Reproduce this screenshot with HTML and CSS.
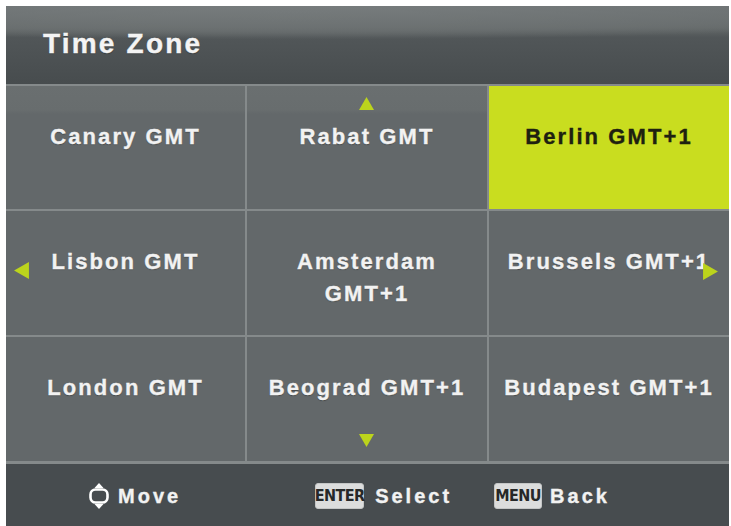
FILE: index.html
```html
<!DOCTYPE html>
<html lang="en">
<head>
<meta charset="utf-8">
<title>Time Zone</title>
<link rel="stylesheet" href="styles.css">
</head>
<body>
<div class="panel">
  <header class="head">
    <h1 class="title">Time Zone</h1>
  </header>
  <div class="grid">
    <div class="cell first">Canary GMT</div>
    <div class="cell first">Rabat GMT
      <svg class="arrow arrow-up" viewBox="0 0 14 12"><polygon points="7,0 14,12 0,12"/></svg>
    </div>
    <div class="cell selected">Berlin GMT+1</div>
    <div class="cell">Lisbon GMT
      <svg class="arrow arrow-left" viewBox="0 0 14 16"><polygon points="0,8 14,0 14,16"/></svg>
    </div>
    <div class="cell">Amsterdam<br>GMT+1</div>
    <div class="cell">Brussels GMT+1
      <svg class="arrow arrow-right" viewBox="0 0 14 16"><polygon points="14,8 0,0 0,16"/></svg>
    </div>
    <div class="cell">London GMT</div>
    <div class="cell">Beograd GMT+1
      <svg class="arrow arrow-down" viewBox="0 0 14 12"><polygon points="7,12 14,0 0,0"/></svg>
    </div>
    <div class="cell">Budapest GMT+1</div>
  </div>
  <footer class="foot">
    <div class="hint hint-move">
      <svg class="move-icon" viewBox="0 0 24 28">
        <rect x="3.5" y="7.5" width="17" height="13" rx="5" ry="5" fill="none" stroke="#ffffff" stroke-width="2.6"/>
        <polygon points="12,1 7.5,6 16.5,6" fill="#ffffff"/>
        <polygon points="12,27 7.5,22 16.5,22" fill="#ffffff"/>
      </svg>
      <span class="hint-label">Move</span>
    </div>
    <div class="hint hint-select">
      <span class="key">ENTER</span>
      <span class="hint-label">Select</span>
    </div>
    <div class="hint hint-back">
      <span class="key key-menu">MENU</span>
      <span class="hint-label">Back</span>
    </div>
  </footer>
</div>
</body>
</html>
```

FILE: styles.css
```css
html, body {
  margin: 0;
  padding: 0;
  background: #ffffff;
}

body {
  font-family: "Liberation Sans", Arial, sans-serif;
}

.panel {
  margin: 6px 2px 0 6px;
  width: 723px;
  height: 520px;
  display: flex;
  flex-direction: column;
  background: #464b4d;
}

.head {
  height: 78px;
  box-sizing: border-box;
  padding: 23px 0 0 37px;
  background:
    radial-gradient(ellipse 140% 60% at 40% 0%, rgba(120, 125, 126, 0.9) 0%, rgba(110, 115, 116, 0.6) 55%, rgba(110, 115, 116, 0) 72%),
    linear-gradient(to bottom, #6c7172 0%, #646969 28%, #515658 40%, #474c4e 100%);
}

.title {
  margin: 0;
  font-size: 28px;
  line-height: 30px;
  font-weight: bold;
  letter-spacing: 2.2px;
  color: #f4f4f4;
  -webkit-text-stroke: 0.4px #f4f4f4;
  text-shadow: 0 1px 1px rgba(0, 0, 0, 0.35);
}

.grid {
  display: grid;
  grid-template-columns: 239px 240px 240px;
  grid-template-rows: 123px 124px 124px;
  gap: 2px;
  padding: 2px 0;
  height: 380px;
  box-sizing: border-box;
  background: #858a8b;
}

.cell {
  position: relative;
  background: #63686a;
  box-sizing: border-box;
  padding-top: 35px;
  text-align: center;
  font-size: 22px;
  line-height: 32px;
  font-weight: bold;
  letter-spacing: 2.1px;
  color: #f2f2f2;
  -webkit-text-stroke: 0.35px #f2f2f2;
  white-space: nowrap;
  text-shadow: 0 1px 1px rgba(0, 0, 0, 0.3);
}

.cell.first {
  background: linear-gradient(to bottom, #6a6f70 0, #686d6e 24px, #63686a 28px, #63686a 100%);
}

.cell.selected {
  background: #c9dd1f;
  color: #1e2110;
  -webkit-text-stroke: 0.35px #1e2110;
  text-shadow: none;
}

.arrow {
  position: absolute;
  fill: #bcd41c;
}

.arrow-up {
  width: 15px;
  height: 13px;
  left: 112px;
  top: 11px;
}

.arrow-down {
  width: 15px;
  height: 13px;
  left: 112px;
  bottom: 14px;
}

.arrow-left {
  width: 15px;
  height: 17px;
  left: 8px;
  top: 51px;
}

.arrow-right {
  width: 15px;
  height: 17px;
  right: 11px;
  top: 52px;
}

.foot {
  flex: 1;
  display: flex;
  align-items: center;
  padding-left: 81px;
  padding-top: 1px;
  background: #474c4f;
  color: #f2f2f2;
}

.hint {
  display: flex;
  align-items: center;
}

.hint-move {
  gap: 7px;
  margin-right: 134px;
}

.hint-select {
  gap: 11px;
  margin-right: 42px;
}

.hint-back {
  gap: 8px;
}

.move-icon {
  width: 24px;
  height: 28px;
}

.hint-label {
  font-size: 20px;
  font-weight: bold;
  letter-spacing: 3px;
  line-height: 24px;
  -webkit-text-stroke: 0.35px #f2f2f2;
}

.key {
  display: inline-flex;
  align-items: center;
  justify-content: center;
  width: 49px;
  height: 26px;
  box-sizing: border-box;
  border-radius: 3px;
  background: #dcdddd;
  border: 1px solid #c4c6c6;
  color: #262828;
  font-family: "Liberation Sans Narrow", "DejaVu Sans Condensed", "Liberation Sans", sans-serif;
  font-size: 16px;
  font-weight: bold;
  letter-spacing: -0.6px;
}

.key-menu {
  width: 48px;
}
```
